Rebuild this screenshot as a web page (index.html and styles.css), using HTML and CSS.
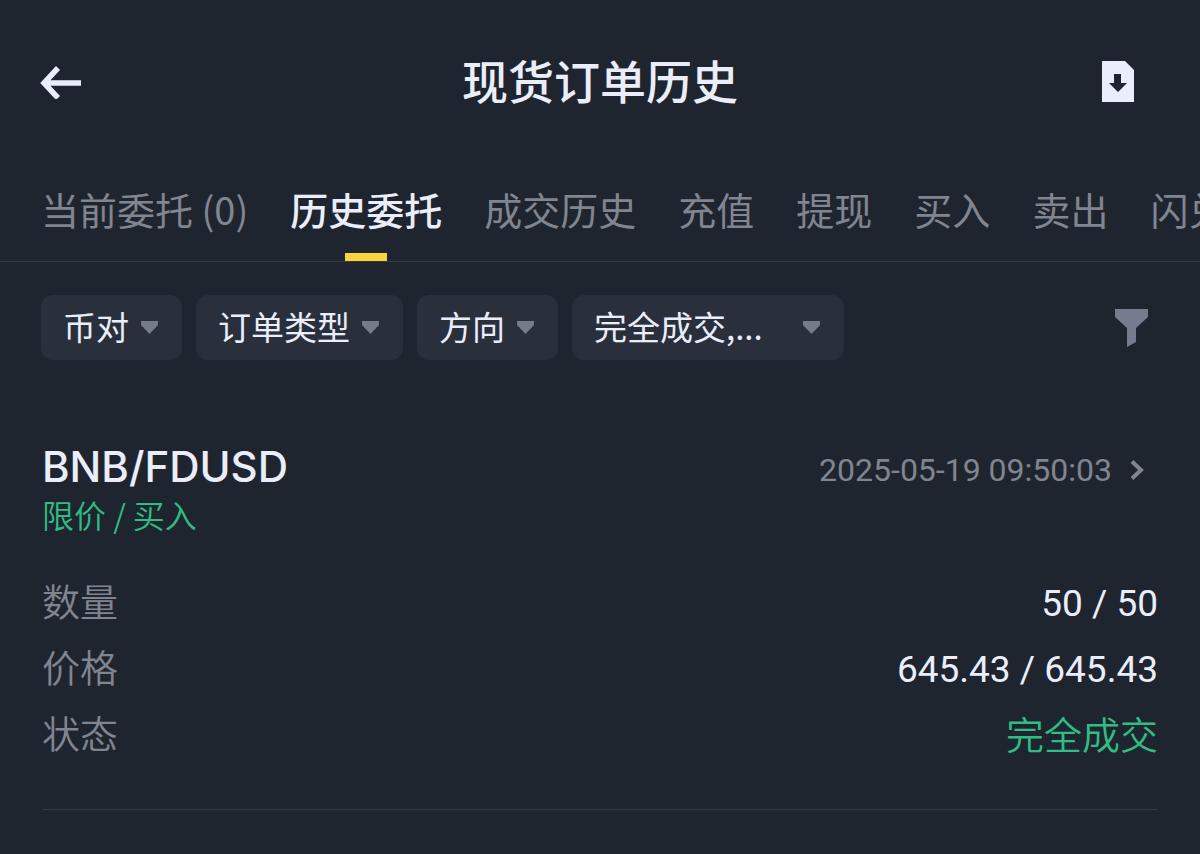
FILE: index.html
```html
<!DOCTYPE html>
<html lang="zh-CN">
<head>
  <meta charset="UTF-8">
  <meta name="viewport" content="width=device-width, initial-scale=1.0">
  <title>现货订单历史</title>
  <link rel="stylesheet" href="styles.css">
</head>
<body>
  <header class="header">
    <button class="icon-button" type="button" aria-label="返回">
      <svg width="42" height="34" viewBox="0 0 42 34" fill="none" stroke="currentColor" stroke-width="5.500">
        <path d="M4 18H41M18 3L4 18L18 33"/>
      </svg>
    </button>
    <h1 class="title">现货订单历史</h1>
    <button class="icon-button export" type="button" aria-label="导出">
      <svg width="33" height="42" viewBox="0 0 33 42">
        <path fill="currentColor" d="M1 0H24L33 9V41H1Z"/>
        <path class="cutout" d="M13 13H20V22H26L17 31L8 22H13Z"/>
      </svg>
    </button>
  </header>

  <nav class="tabs">
    <a class="tab" href="#open">当前委托 (0)</a>
    <a class="tab active" href="#history">历史委托</a>
    <a class="tab" href="#trades">成交历史</a>
    <a class="tab" href="#deposit">充值</a>
    <a class="tab" href="#withdraw">提现</a>
    <a class="tab" href="#buy">买入</a>
    <a class="tab" href="#sell">卖出</a>
    <a class="tab" href="#convert">闪兑</a>
  </nav>

  <main>
    <!-- 筛选栏 -->
    <form class="filters">
      <div class="filter">
        <select aria-label="币对"><option>币对</option></select>
        <svg class="caret" width="17" height="13" viewBox="0 0 17 13"><path d="M0 0H17V4L8.500 13L0 4Z"/></svg>
      </div>
      <div class="filter">
        <select aria-label="订单类型"><option>订单类型</option></select>
        <svg class="caret" width="17" height="13" viewBox="0 0 17 13"><path d="M0 0H17V4L8.500 13L0 4Z"/></svg>
      </div>
      <div class="filter">
        <select aria-label="方向"><option>方向</option></select>
        <svg class="caret" width="17" height="13" viewBox="0 0 17 13"><path d="M0 0H17V4L8.500 13L0 4Z"/></svg>
      </div>
      <div class="filter status">
        <select aria-label="状态"><option>完全成交,...</option></select>
        <svg class="caret" width="17" height="13" viewBox="0 0 17 13"><path d="M0 0H17V4L8.500 13L0 4Z"/></svg>
      </div>
      <button class="icon-button funnel" type="button" aria-label="筛选">
        <svg width="33" height="39" viewBox="0 0 33 39">
          <path fill="currentColor" d="M0 1H33V9L21 20V34L12 39V20L0 9Z"/>
        </svg>
      </button>
    </form>

    <!-- 订单 -->
    <article class="order">
      <div class="order-head">
        <h2 class="pair">BNB/FDUSD</h2>
        <a class="time" href="#detail">
          <time datetime="2025-05-19T09:50:03">2025-05-19 09:50:03</time>
          <svg width="14" height="20" viewBox="0 0 14 20" fill="none" stroke="currentColor" stroke-width="4">
            <path d="M2 1.500L11 10L2 18.500"/>
          </svg>
        </a>
      </div>
      <p class="side">限价 / 买入</p>
      <dl class="details">
        <div class="row">
          <dt>数量</dt>
          <dd>50 / 50</dd>
        </div>
        <div class="row">
          <dt>价格</dt>
          <dd>645.43 / 645.43</dd>
        </div>
        <div class="row">
          <dt>状态</dt>
          <dd class="filled">完全成交</dd>
        </div>
      </dl>
    </article>
  </main>
</body>
</html>
```
FILE: styles.css
```css
* {
  margin: 0;
  padding: 0;
  box-sizing: border-box;
}
body {
  background: #1f252f;
  color: #eaeefa;
  font-family: "Noto Sans CJK SC", sans-serif;
  overflow-x: hidden;
}
a {
  color: inherit;
  text-decoration: none;
}
.icon-button {
  display: flex;
  background: none;
  border: none;
  color: #eaeefa;
  cursor: pointer;
}

/* 顶部 */
.header {
  display: grid;
  grid-template-columns: 1fr auto 1fr;
  align-items: center;
  padding: 48px 40px 0;
}
.title {
  padding-bottom: 6px;
  font-size: 46px;
  font-weight: 500;
  line-height: 62px;
}
.export {
  justify-self: end;
  margin-right: 26px;
}
.cutout {
  fill: #1f252f;
}

/* 标签页 */
.tabs {
  display: flex;
  gap: 42px;
  margin-top: 46px;
  padding-left: 41px;
  border-bottom: 1px solid #343a44;
  overflow: hidden;
}
.tab {
  position: relative;
  flex-shrink: 0;
  height: 99px;
  color: #80858f;
  font-size: 38px;
  line-height: 94px;
  white-space: nowrap;
}
.tab.active {
  color: #eaeefa;
  font-weight: 500;
}
.tab.active::after {
  content: "";
  position: absolute;
  bottom: 0;
  left: 50%;
  width: 42px;
  height: 8px;
  background: #fcd33f;
  transform: translateX(-50%);
}

/* 筛选 */
.filters {
  display: flex;
  align-items: center;
  gap: 14px;
  padding: 33px 52px 0 41px;
}
.filter {
  position: relative;
}
.filter select {
  appearance: none;
  width: 100%;
  height: 65px;
  padding: 0 53px 3px 22px;
  background: #29303b;
  border: none;
  border-radius: 12px;
  color: #eaeefa;
  font-family: inherit;
  font-size: 33px;
}
.status {
  width: 272px;
}
.caret {
  position: absolute;
  top: 26px;
  right: 24px;
  fill: #767b88;
  pointer-events: none;
}
.funnel {
  margin-left: auto;
  color: #767b8e;
}

/* 订单卡片 */
.order {
  margin: 0 42px;
  padding: 77px 0 42px;
  border-bottom: 1px solid #343a44;
}
.order-head {
  display: flex;
  justify-content: space-between;
  align-items: center;
}
.pair {
  font-family: Inter, sans-serif;
  font-size: 42px;
  font-weight: 500;
  line-height: 60px;
}
.time {
  display: flex;
  align-items: center;
  gap: 18px;
  padding: 6px 14px 0 0;
  color: #80858f;
  font-family: Roboto, sans-serif;
  font-size: 32px;
}
.side {
  color: #2fbd85;
  font-size: 32px;
  font-weight: 350;
  line-height: 34px;
}
.details {
  margin-top: 38px;
}
.row {
  display: flex;
  justify-content: space-between;
  line-height: 62px;
}
.row dt {
  color: #80858f;
  font-size: 38px;
  font-weight: 350;
}
.row dd {
  padding-top: 4px;
  font-family: Roboto, "Noto Sans CJK SC", sans-serif;
  font-size: 37px;
}
.row .filled {
  color: #2fbd85;
  font-size: 38px;
  font-weight: 350;
}
```
